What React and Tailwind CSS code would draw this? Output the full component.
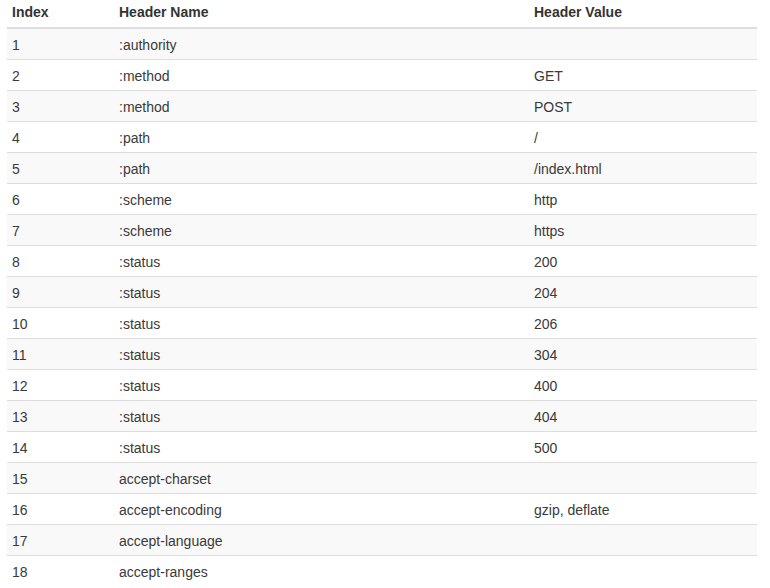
const rows = [
  [1, ':authority', ''],
  [2, ':method', 'GET'],
  [3, ':method', 'POST'],
  [4, ':path', '/'],
  [5, ':path', '/index.html'],
  [6, ':scheme', 'http'],
  [7, ':scheme', 'https'],
  [8, ':status', '200'],
  [9, ':status', '204'],
  [10, ':status', '206'],
  [11, ':status', '304'],
  [12, ':status', '400'],
  [13, ':status', '404'],
  [14, ':status', '500'],
  [15, 'accept-charset', ''],
  [16, 'accept-encoding', 'gzip, deflate'],
  [17, 'accept-language', ''],
  [18, 'accept-ranges', ''],
];

const cols = 'grid grid-cols-[107px_415px_228px]';

const App = () => {
  return (
    <div className="min-h-[588px] bg-white pl-[7px] text-[14px] text-[#3a3a3a] font-['Liberation_Sans',Arial,sans-serif]">
      <div className="w-[750px]">
        <div className={`${cols} h-[29px] items-center pb-[2px] border-b-2 border-[#ddd] font-bold text-[#333]`}>
          <div className="px-[5px]">Index</div>
          <div className="px-[5px]">Header Name</div>
          <div className="px-[5px]">Header Value</div>
        </div>
        {rows.map(([idx, name, value], i) => (
          <div
            key={idx}
            className={`${cols} items-center pt-[2px] ${i === 0 ? 'h-[30px]' : 'h-[31px] border-t border-[#ddd]'} ${i % 2 === 0 ? 'bg-[#f9f9f9]' : 'bg-white'}`}
          >
            <div className="px-[5px]">{idx}</div>
            <div className="px-[5px]">{name}</div>
            <div className="px-[5px]">{value}</div>
          </div>
        ))}
      </div>
    </div>
  );
};

export default App;
